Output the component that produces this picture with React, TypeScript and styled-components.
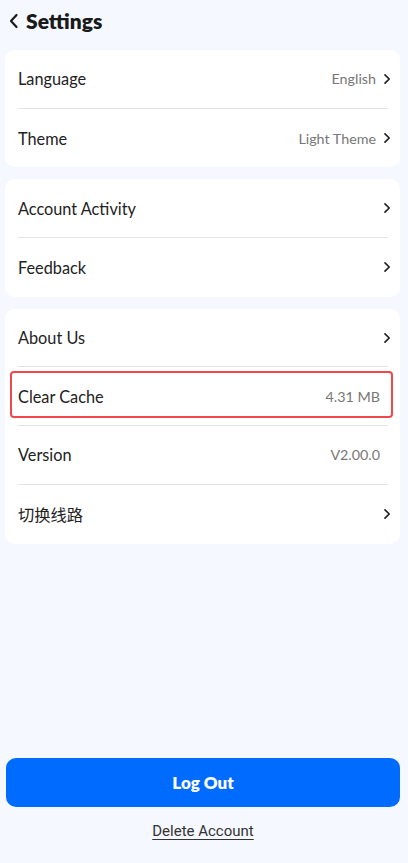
import React from 'react'
import styled, { createGlobalStyle } from 'styled-components'

interface RowData {
    label: string
    value?: string
    arrow?: boolean
    highlight?: boolean
}

const groups: RowData[][] = [
    [
        { label: 'Language', value: 'English', arrow: true },
        { label: 'Theme', value: 'Light Theme', arrow: true },
    ],
    [
        { label: 'Account Activity', arrow: true },
        { label: 'Feedback', arrow: true },
    ],
    [
        { label: 'About Us', arrow: true },
        { label: 'Clear Cache', value: '4.31 MB', highlight: true },
        { label: 'Version', value: 'V2.00.0' },
        { label: '切换线路', arrow: true },
    ],
]

const Chevron = () => (
    <svg width="8" height="12" viewBox="0 0 8 12" fill="none">
        <path d="M2 1.8L6.2 6L2 10.2" stroke="#222222" strokeWidth="1.7" strokeLinecap="round" strokeLinejoin="round" />
    </svg>
)

const BackIcon = () => (
    <svg width="12" height="16" viewBox="0 0 12 16" fill="none">
        <path d="M8.5 2L3 8L8.5 14" stroke="#1a1a1a" strokeWidth="2.2" strokeLinecap="round" strokeLinejoin="round" />
    </svg>
)

const App = () => {
    return (
        <Page>
            <GlobalStyle />
            <Header>
                <BackButton><BackIcon /></BackButton>
                <Title>Settings</Title>
            </Header>

            <Groups>
                {groups.map((rows, gi) => (
                    <Card key={gi}>
                        {rows.map((row, ri) => (
                            <Row key={row.label} $last={ri === rows.length - 1}>
                                {row.highlight && <Highlight />}
                                <Label>{row.label}</Label>
                                <Right $arrow={!!row.arrow}>
                                    {row.value && <Value>{row.value}</Value>}
                                    {row.arrow && <Chevron />}
                                </Right>
                            </Row>
                        ))}
                    </Card>
                ))}
            </Groups>

            <Spacer />

            <Footer>
                <LogoutButton>Log Out</LogoutButton>
                <DeleteLink>Delete Account</DeleteLink>
            </Footer>
        </Page>
    )
}

const GlobalStyle = createGlobalStyle`
    html, body {
        margin: 0;
        padding: 0;
        background: #f5f8fe;
    }
    * {
        box-sizing: border-box;
    }
`;

const Page = styled.div`
    width: 408px;
    min-height: 863px;
    background: #f5f8fe;
    font-family: Lato, "Noto Sans", "Noto Sans CJK SC", sans-serif;
    color: #222222;

    display: flex;
    flex-direction: column;
`;

const Header = styled.div`
    height: 50px;
    padding: 0 0 9px 6px;

    display: flex;
    align-items: center;
`;

const BackButton = styled.div`
    width: 16px;
    height: 16px;
    margin-right: 4px;

    display: flex;
    align-items: center;
    justify-content: center;
`;

const Title = styled.div`
    font-size: 21px;
    font-weight: 800;
    color: #1a1a1a;
`;

const Groups = styled.div`
    padding: 0 8px 0 5px;

    display: flex;
    flex-direction: column;
    gap: 12px;
`;

const Card = styled.div`
    background: #ffffff;
    border-radius: 10px;
    padding: 0 9px 0 13px;
`;

const Row = styled.div<{ $last: boolean }>`
    position: relative;
    height: 58.7px;
    border-bottom: ${p => (p.$last ? 'none' : '1px solid #e4e4e4')};
    margin-right: 3px;

    display: flex;
    align-items: center;
    justify-content: space-between;
`;

const Highlight = styled.div`
    position: absolute;
    left: -8px;
    right: -5px;
    top: 4px;
    bottom: 7px;
    border: 2px solid #f04848;
    border-radius: 4px;
    pointer-events: none;
`;

const Label = styled.span`
    font-size: 16.3px;
    color: #222222;
`;

const Right = styled.div<{ $arrow: boolean }>`
    margin-right: ${p => (p.$arrow ? '-3px' : '8px')};

    display: flex;
    align-items: center;
    gap: 7px;
`;

const Value = styled.span`
    font-size: 14.3px;
    color: #777777;
`;

const Spacer = styled.div`
    flex: 1;
`;

const Footer = styled.div`
    padding: 0 8px 23px 6px;

    display: flex;
    flex-direction: column;
    align-items: center;
    gap: 15px;
`;

const LogoutButton = styled.button`
    width: 100%;
    height: 49px;
    border: none;
    border-radius: 10px;
    background: #006cff;
    color: #ffffff;
    font-family: Lato, "Noto Sans", sans-serif;
    font-size: 17px;
    font-weight: 800;
`;

const DeleteLink = styled.span`
    font-family: Roboto, sans-serif;
    font-size: 15px;
    color: #333333;
    text-decoration: underline;
    text-underline-offset: 3px;
`;

export default App;
